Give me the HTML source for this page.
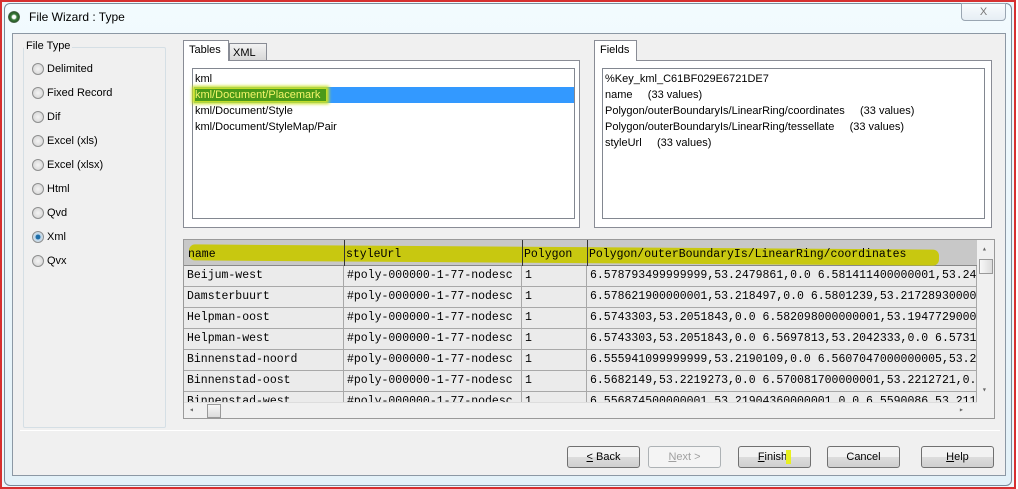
<!DOCTYPE html>
<html><head><meta charset="utf-8"><style>
*{box-sizing:border-box;margin:0;padding:0}
body{width:1018px;height:489px;position:relative;overflow:hidden;background:#fff;font-family:"Liberation Sans",sans-serif;font-size:11px;color:#000}
.a{position:absolute}
.frame{left:0;top:0;width:1016px;height:489px;border:2px solid #d63030;background:#eef7fb}
.win{left:4px;top:3px;width:1008px;height:483px;border:1px solid #7a8a99;border-radius:6px;background:linear-gradient(#f2fbfe,#e3f1f8)}
.body{left:12px;top:33px;width:994px;height:443px;background:#f0f0f0;border:1px solid #8c98a4}
.grp{border:1px solid #d5dfe5;border-radius:2px}
.radio{left:32px;width:12px;height:12px;border-radius:50%;border:1px solid #8e8f8f;background:radial-gradient(#f4f4f4,#d0d0d0)}
.rl{left:47px;font-size:11px}
.tabpanel{background:#fff;border:1px solid #898c95}
.list{background:#fff;border:1px solid #828790;font-size:11px;line-height:16px;padding-left:2px}
.grid{font-family:"Liberation Mono",monospace;font-size:11.5px}
.cell{position:absolute;height:21px;line-height:20px;padding-left:3px;border-right:1px solid #a8a8a8;border-bottom:1px solid #a8a8a8;background:#ebebeb;white-space:nowrap;overflow:hidden}
.btn{top:446px;height:22px;border:1px solid #707070;border-radius:3px;background:linear-gradient(#f2f2f2 50%,#dddddd 50%,#cfcfcf);text-align:center;line-height:20px;font-size:11px}
</style></head><body>
<div class="a frame"></div>
<div class="a win"></div>
<div class="a" style="left:8px;top:11px;width:12px;height:12px;border-radius:50%;background:radial-gradient(#fff 20%,#3a7d3a 35%,#2a5a2a 60%,#888 75%)"></div>
<div class="a" style="left:29px;top:10px;font-size:12px">File Wizard : Type</div>
<div class="a" style="left:961px;top:3px;width:45px;height:18px;border:1px solid #9aa6b2;border-radius:0 0 4px 4px;background:linear-gradient(#f8fbfd,#e6eef4);text-align:center;font-size:11px;color:#777;line-height:16px">X</div>
<div class="a body"></div>
<div class="a grp" style="left:23px;top:47px;width:143px;height:381px"></div>
<div class="a" style="left:24px;top:40px;background:#f0f0f0;padding:0 2px">File Type</div>
<div class="a radio" style="top:63px"></div><div class="a rl" style="top:63px">Delimited</div>
<div class="a radio" style="top:87px"></div><div class="a rl" style="top:87px">Fixed Record</div>
<div class="a radio" style="top:111px"></div><div class="a rl" style="top:111px">Dif</div>
<div class="a radio" style="top:135px"></div><div class="a rl" style="top:135px">Excel (xls)</div>
<div class="a radio" style="top:159px"></div><div class="a rl" style="top:159px">Excel (xlsx)</div>
<div class="a radio" style="top:183px"></div><div class="a rl" style="top:183px">Html</div>
<div class="a radio" style="top:207px"></div><div class="a rl" style="top:207px">Qvd</div>
<div class="a radio" style="top:231px;background:radial-gradient(#1d6da8 30%,#bcd6ea 40%,#e8e8e8)"></div><div class="a rl" style="top:231px">Xml</div>
<div class="a radio" style="top:255px"></div><div class="a rl" style="top:255px">Qvx</div>
<div class="a tabpanel" style="left:183px;top:60px;width:397px;height:168px"></div>
<div class="a" style="left:229px;top:43px;width:38px;height:18px;border:1px solid #898c95;background:linear-gradient(#f2f2f2,#d8d8d8);padding:3px 0 0 3px">XML</div>
<div class="a" style="left:183px;top:40px;width:46px;height:21px;border:1px solid #898c95;border-bottom:none;background:#fff;padding:3px 0 0 5px">Tables</div>
<div class="a list" style="left:192px;top:68px;width:383px;height:151px;padding-top:2px">
<div>kml</div>
<div style="background:#3399ff;margin-left:-1px;padding-left:1px;position:relative"><span style="background:#4a9a18;color:#f4f46a;box-shadow:0 0 3px 3px #c8e020;padding-right:6px">kml/Document/Placemark</span></div>
<div>kml/Document/Style</div>
<div>kml/Document/StyleMap/Pair</div>
</div>
<div class="a tabpanel" style="left:594px;top:60px;width:398px;height:168px"></div>
<div class="a" style="left:594px;top:40px;width:43px;height:21px;border:1px solid #898c95;border-bottom:none;background:#fff;padding:3px 0 0 5px">Fields</div>
<div class="a list" style="left:602px;top:68px;width:383px;height:151px;padding-top:2px">
<div>%Key_kml_C61BF029E6721DE7</div>
<div>name&nbsp;&nbsp;&nbsp;&nbsp;&nbsp;(33 values)</div>
<div>Polygon/outerBoundaryIs/LinearRing/coordinates&nbsp;&nbsp;&nbsp;&nbsp;&nbsp;(33 values)</div>
<div>Polygon/outerBoundaryIs/LinearRing/tessellate&nbsp;&nbsp;&nbsp;&nbsp;&nbsp;(33 values)</div>
<div>styleUrl&nbsp;&nbsp;&nbsp;&nbsp;&nbsp;(33 values)</div>
</div>
<div class="a grid" style="left:183px;top:239px;width:812px;height:180px;border:1px solid #9a9a9a;background:#ebebeb;overflow:hidden">
<div class="a" style="left:0;top:0;width:793px;height:26px;background:#c8c8c8;border-bottom:1px solid #888"></div>
<div class="a" style="left:5px;top:7px;width:750px;height:16px;background:#c8c810;border-radius:6px;transform:rotate(0.4deg)"></div>
<div class="a" style="left:4px;top:9px;line-height:12px">name</div>
<div class="a" style="left:160px;top:0;width:1px;height:26px;background:#333"></div>
<div class="a" style="left:162px;top:9px;line-height:12px">styleUrl</div>
<div class="a" style="left:338px;top:0;width:1px;height:26px;background:#333"></div>
<div class="a" style="left:340px;top:9px;line-height:12px">Polygon</div>
<div class="a" style="left:403px;top:0;width:1px;height:26px;background:#333"></div>
<div class="a" style="left:405px;top:9px;line-height:12px">Polygon/outerBoundaryIs/LinearRing/coordinates</div>
<div id="rows"></div>
<div class="a" style="left:0;top:162px;width:793px;height:18px;background:#f0f0f0;border-top:1px solid #ddd"></div>
<div class="a" style="left:5px;top:165px;font-size:8px;color:#666">◂</div>
<div class="a" style="left:23px;top:164px;width:14px;height:14px;border:1px solid #999;background:linear-gradient(#f8f8f8,#dcdcdc)"></div>
<div class="a" style="left:775px;top:165px;font-size:8px;color:#666">▸</div>
<div class="a" style="left:793px;top:0;width:18px;height:180px;background:#f0f0f0"></div>
<div class="a" style="left:798px;top:4px;font-size:8px;color:#666">▴</div>
<div class="a" style="left:795px;top:19px;width:14px;height:15px;border:1px solid #999;background:linear-gradient(90deg,#f8f8f8,#dcdcdc)"></div>
<div class="a" style="left:798px;top:145px;font-size:8px;color:#666">▾</div>
</div>
<div class="a" style="left:20px;top:430px;width:980px;height:1px;background:#a0a0a0;border-bottom:1px solid #fff"></div>
<div class="a btn" style="left:567px;width:73px"><u>&lt;</u> Back</div>
<div class="a btn" style="left:648px;width:73px;border-color:#adb2b5;background:#f4f4f4;color:#a0a0a0"><u>N</u>ext &gt;</div>
<div class="a btn" style="left:738px;width:73px"><u>F</u>inish<span style="display:inline-block;width:5px;height:14px;background:#e8f020;vertical-align:middle;margin-left:-1px"></span></div>
<div class="a btn" style="left:827px;width:73px">Cancel</div>
<div class="a btn" style="left:921px;width:73px"><u>H</u>elp</div>
<script>
var d=[["Beijum-west","6.578793499999999,53.2479861,0.0 6.581411400000001,53.24"],["Damsterbuurt","6.578621900000001,53.218497,0.0 6.5801239,53.21728930000"],["Helpman-oost","6.5743303,53.2051843,0.0 6.582098000000001,53.19477290000"],["Helpman-west","6.5743303,53.2051843,0.0 6.5697813,53.2042333,0.0 6.5731"],["Binnenstad-noord","6.555941099999999,53.2190109,0.0 6.5607047000000005,53.2"],["Binnenstad-oost","6.5682149,53.2219273,0.0 6.570081700000001,53.2212721,0."],["Binnenstad-west","6.556874500000001,53.21904360000001,0.0 6.5590086,53.211"]];
var h="";d.forEach(function(r,i){var t=26+i*21;
h+='<div class="cell" style="left:0;top:'+t+'px;width:160px">'+r[0]+'</div>';
h+='<div class="cell" style="left:160px;top:'+t+'px;width:178px">#poly-000000-1-77-nodesc</div>';
h+='<div class="cell" style="left:338px;top:'+t+'px;width:65px">1</div>';
h+='<div class="cell" style="left:403px;top:'+t+'px;width:390px">'+r[1]+'</div>';});
document.getElementById("rows").innerHTML=h;
</script>
</body></html>
